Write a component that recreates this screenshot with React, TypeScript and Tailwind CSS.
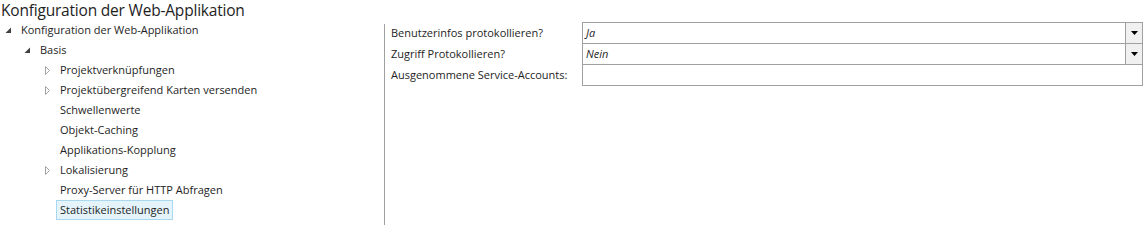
import React from 'react'

type Node = { label: string, level: number, arrow?: 'open'|'closed', selected?: boolean }

const tree: Node[] = [
  { label: 'Konfiguration der Web-Applikation', level: 0, arrow: 'open' },
  { label: 'Basis', level: 1, arrow: 'open' },
  { label: 'Projektverknüpfungen', level: 2, arrow: 'closed' },
  { label: 'Projektübergreifend Karten versenden', level: 2, arrow: 'closed' },
  { label: 'Schwellenwerte', level: 2 },
  { label: 'Objekt-Caching', level: 2 },
  { label: 'Applikations-Kopplung', level: 2 },
  { label: 'Lokalisierung', level: 2, arrow: 'closed' },
  { label: 'Proxy-Server für HTTP Abfragen', level: 2 },
  { label: 'Statistikeinstellungen', level: 2, selected: true },
]

const indent = ['pl-[5px]', 'pl-[24px]', 'pl-[44px]']

function Arrow({ kind }: { kind?: 'open'|'closed' }){
  if (kind === 'open') return (
    <svg width="7" height="7" viewBox="0 0 7 7" className="shrink-0"><path d="M6 0.5 L6 6 L0.5 6 Z" fill="#404040"/></svg>
  )
  if (kind === 'closed') return (
    <svg width="7" height="9" viewBox="0 0 7 9" className="shrink-0"><path d="M1.5 0.5 L5.5 4.5 L1.5 8.5 Z" fill="none" stroke="#a6a6a6"/></svg>
  )
  return <span className="w-[7px] shrink-0"/>
}

function Combo({ value }: { value: string }){
  return (
    <div className="flex h-[21px] border-b border-[#a0a0a0]">
      <div className="flex-1 pl-[3px] italic leading-[20px]">{value}</div>
      <div className="w-[17px] bg-[#f0f0f0] border-l border-[#a0a0a0] flex items-center justify-center">
        <svg width="7" height="4" viewBox="0 0 7 4"><path d="M0 0 L7 0 L3.5 4 Z" fill="#000"/></svg>
      </div>
    </div>
  )
}

export default function App(){
  return (
    <div className="w-[1147px] h-[225px] bg-white text-[#1e1e1e] overflow-hidden" style={{ fontFamily: '"Open Sans", "Noto Sans", sans-serif' }}>
      <div className="text-[15.5px] leading-[20px] pl-[1px] -tracking-[0.2px]">Konfiguration der Web-Applikation</div>
      <div className="flex">
        <div className="w-[384px] text-[11px]">
          {tree.map(n=> (
            <div key={n.label} className={`flex items-center h-[20px] ${indent[n.level]}`}>
              <Arrow kind={n.arrow}/>
              <span className="ml-[5px]">
                <span className={`inline-block px-[3px] leading-[18px] border ${n.selected ? 'bg-[#e5f3fb] border-[#a8d8f0]' : 'border-transparent'}`}>{n.label}</span>
              </span>
            </div>
          ))}
        </div>
        <div className="w-px h-[201px] mt-[4px] bg-[#a0a0a0]"/>
        <div className="flex pt-[2px] pl-[6px] text-[11px]">
          <div className="w-[191px]">
            <div className="h-[21px] leading-[21px]">Benutzerinfos protokollieren?</div>
            <div className="h-[21px] leading-[21px]">Zugriff Protokollieren?</div>
            <div className="h-[21px] leading-[21px]">Ausgenommene Service-Accounts:</div>
          </div>
          <div className="w-[561px] border-x border-t border-[#a0a0a0] self-start">
            <Combo value="Ja"/>
            <Combo value="Nein"/>
            <div className="h-[21px] border-b border-[#a0a0a0]"/>
          </div>
        </div>
      </div>
    </div>
  )
}
